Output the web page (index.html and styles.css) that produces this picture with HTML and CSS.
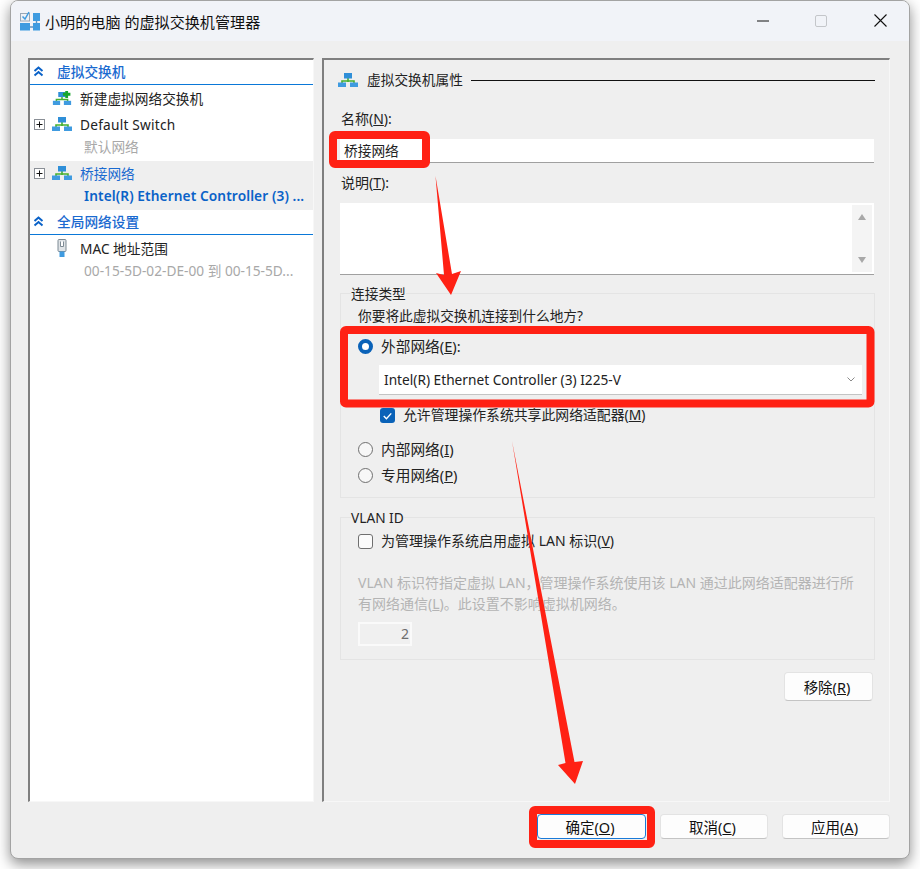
FILE: index.html
```html
<!DOCTYPE html>
<html lang="zh-CN">
<head>
<meta charset="utf-8">
<title>虚拟交换机管理器</title>
<link rel="stylesheet" href="styles.css">
</head>
<body>
<svg class="defs" width="0" height="0" aria-hidden="true">
  <symbol id="net" viewBox="0 0 20 14">
    <path d="M10 5v4M4 10V8h12v2" fill="none" stroke="#46b02e" stroke-width="1.6"/>
    <rect x="6" y="0" width="8" height="5.500" fill="#2f8fd8"/>
    <rect x="0" y="9.500" width="8" height="4.500" fill="#3f9be0"/>
    <rect x="12" y="9.500" width="8" height="4.500" fill="#3f9be0"/>
  </symbol>
  <symbol id="chev" viewBox="0 0 11 11">
    <path d="M1.500 5 5.500 1.500 9.500 5M1.500 9.500 5.500 6 9.500 9.500" fill="none" stroke="#0a62c8" stroke-width="2"/>
  </symbol>
  <symbol id="plus" viewBox="0 0 11 11">
    <rect x=".5" y=".5" width="10" height="10" fill="#fff" stroke="#8a8f96"/>
    <path d="M2.500 5.500h6M5.500 2.500v6" stroke="#111" stroke-width="1"/>
  </symbol>
</svg>

<div class="window">
  <header class="titlebar">
    <svg class="app-icon" viewBox="0 0 20 20">
      <path d="M10 16h3M16.500 10v2" stroke="#5f93bf" stroke-width="1.400"/>
      <rect x="13" y="2" width="7" height="8" fill="#3f9be0"/>
      <rect x="0" y="12" width="10" height="7.500" fill="#3f9be0"/>
      <rect x="13" y="12" width="7" height="7.500" fill="#3f9be0"/>
      <rect x=".5" y="2.500" width="9" height="7.500" fill="#eef1f6" stroke="#9aa8b6"/>
      <path d="M2.500 5.500l2.500 2.500 4-7" fill="none" stroke="#3f9be0" stroke-width="1.500"/>
    </svg>
    <h1 class="title">小明的电脑 的虚拟交换机管理器</h1>
    <div class="controls">
      <svg class="ctl ctl-min" viewBox="0 0 12 12"><path d="M0 6h12" stroke="#111" stroke-width="1"/></svg>
      <svg class="ctl ctl-max" viewBox="0 0 12 12"><rect x=".5" y=".5" width="11" height="11" rx="1.500" fill="none" stroke="#c4c6ca"/></svg>
      <svg class="ctl ctl-close" viewBox="0 0 13 13"><path d="M.5.500l12 12M12.500.500l-12 12" stroke="#111" stroke-width="1.100"/></svg>
    </div>
  </header>

  <main class="content">
    <div class="panes">
      <nav class="pane tree">
        <div class="sec-head"><svg class="chev"><use href="#chev"/></svg><span>虚拟交换机</span></div>
        <div class="row row-new">
          <span class="exp"></span>
          <svg class="net" viewBox="0 0 20 15">
            <use href="#net" width="20" height="14" y="1"/>
            <path d="M11 3.500h8M15 0v7.500" stroke="#17a52c" stroke-width="3"/>
          </svg>
          <span>新建虚拟网络交换机</span>
        </div>
        <div class="row row-sw">
          <svg class="exp"><use href="#plus"/></svg>
          <svg class="net"><use href="#net"/></svg>
          <span class="latin">Default Switch</span>
        </div>
        <div class="sub sub-gray">默认网络</div>
        <div class="selected">
          <div class="row row-sel">
            <svg class="exp"><use href="#plus"/></svg>
            <svg class="net"><use href="#net"/></svg>
            <span class="blue">桥接网络</span>
          </div>
          <div class="sub sub-bold">Intel(R) Ethernet Controller (3) ...</div>
        </div>
        <div class="sec-head"><svg class="chev"><use href="#chev"/></svg><span>全局网络设置</span></div>
        <div class="row row-mac">
          <span class="exp"></span>
          <svg class="net mac" viewBox="0 0 20 18">
            <rect x="6" y="0.500" width="8" height="12" rx="1" fill="#dfe3e6" stroke="#7d8a94"/>
            <path d="M8.500 2.500v5h3v-5" fill="#fff" stroke="#7d8a94"/>
            <rect x="7.500" y="12.500" width="5" height="5.500" fill="#3f9be0"/>
          </svg>
          <span>MAC 地址范围</span>
        </div>
        <div class="sub sub-gray sub-mac">00-15-5D-02-DE-00 到 00-15-5D...</div>
      </nav>

      <section class="pane props">
        <div class="prop-title">
          <svg class="net"><use href="#net"/></svg>
          <span class="prop-name">虚拟交换机属性</span>
          <i class="rule"></i>
        </div>
        <label class="label label-name">名称(<u>N</u>):</label>
        <div class="input">桥接网络</div>
        <label class="label">说明(<u>T</u>):</label>
        <div class="textarea">
          <div class="scroll">
            <svg class="tri" viewBox="0 0 8 6"><path d="M4 0l4 6H0z" fill="#a8a8a8"/></svg>
            <svg class="tri" viewBox="0 0 8 6"><path d="M0 0h8L4 6z" fill="#a8a8a8"/></svg>
          </div>
        </div>

        <div class="group group-conn">
          <div class="legend">连接类型</div>
          <div class="line line-q">你要将此虚拟交换机连接到什么地方?</div>
          <div class="line opt big opt-ext"><span class="radio on"></span><span>外部网络(<u>E</u>):</span></div>
          <div class="select">
            <span>Intel(R) Ethernet Controller (3) I225-V</span>
            <svg class="caret" viewBox="0 0 8 5"><path d="M.5.500 4 4 7.500.500" fill="none" stroke="#8a8a8a"/></svg>
          </div>
          <div class="line opt opt-share">
            <span class="check on"><svg viewBox="0 0 14 14"><path d="M3.500 7.500l2.500 2.500 4.500-5" fill="none" stroke="#fff" stroke-width="1.300"/></svg></span>
            <span>允许管理操作系统共享此网络适配器(<u>M</u>)</span>
          </div>
          <div class="line opt big opt-int"><span class="radio"></span><span>内部网络(<u>I</u>)</span></div>
          <div class="line opt big opt-pri"><span class="radio"></span><span>专用网络(<u>P</u>)</span></div>
        </div>

        <div class="group group-vlan">
          <div class="legend">VLAN ID</div>
          <div class="line opt opt-vlan"><span class="check"></span><span>为管理操作系统启用虚拟 LAN 标识(<u>V</u>)</span></div>
          <p class="hint">VLAN 标识符指定虚拟 LAN，管理操作系统使用该 LAN 通过此网络适配器进行所有网络通信(<u>L</u>)。此设置不影响虚拟机网络。</p>
          <div class="num">2</div>
        </div>

        <div class="remove-row"><button class="btn btn-remove">移除(<u>R</u>)</button></div>
      </section>
    </div>

    <footer class="footer">
      <button class="btn btn-main primary">确定(<u>O</u>)</button>
      <button class="btn btn-main">取消(<u>C</u>)</button>
      <button class="btn btn-main">应用(<u>A</u>)</button>
    </footer>
  </main>
</div>

<svg class="marks" viewBox="0 0 920 869" aria-hidden="true">
  <g fill="none" stroke="#ff2114" stroke-width="8">
    <rect x="333" y="135" width="93" height="29" rx="2"/>
    <rect x="344" y="330" width="526.500" height="73.500" rx="2"/>
    <rect x="533" y="810" width="118" height="34" rx="2"/>
  </g>
  <g fill="#ff2114">
    <polygon points="435.500,176 444,275 436,273 451,295 461,271 452,274"/>
    <polygon points="512,441 565.500,763 558,765 575,784 583,761 574.500,762"/>
  </g>
</svg>
</body>
</html>
```

FILE: styles.css
```css
* { box-sizing: border-box; }

html, body { margin: 0; padding: 0; }

body {
  width: 920px;
  height: 869px;
  overflow: hidden;
  background: #fff;
  padding: 0 10px;
  font-family: "Noto Sans", "Noto Sans CJK SC", sans-serif;
  font-size: 13.7px;
  color: #222;
}

.defs { position: absolute; }

u { text-underline-offset: 1px; }

.window {
  width: 900px;
  height: 859px;
  border: 1px solid #a3a3a3;
  border-radius: 8px;
  background: #efefef;
  box-shadow: 0 5px 14px rgba(0, 0, 0, .45);
  overflow: hidden;
  display: flex;
  flex-direction: column;
}

.titlebar {
  height: 40px;
  flex: none;
  background: #f1f3f8;
  display: flex;
  align-items: center;
  padding: 0 0 1px 9px;
}

.app-icon { width: 20px; height: 20px; flex: none; }

.title {
  margin: 0 0 0 5px;
  font-size: 15.1px;
  font-weight: 400;
  color: #111;
  white-space: nowrap;
}

.controls { margin-left: auto; display: flex; align-items: center; }
.ctl { display: block; }
.ctl-min { width: 12px; height: 12px; margin-right: 46px; }
.ctl-max { width: 12px; height: 12px; margin-right: 47px; }
.ctl-close { width: 13px; height: 13px; margin-right: 22px; }

.content { flex: 1; padding: 17px 19px 0 17px; }

.panes { display: flex; gap: 8px; height: 744px; }

.pane {
  border-style: solid;
  border-width: 2px 1px 1px 2px;
  border-color: #7f7f7f #f7f7f7 #f7f7f7 #7f7f7f;
}

/* tree */
.tree { width: 286px; background: #fff; flex: none; }

.sec-head {
  height: 25px;
  border-bottom: 1px solid #0a78d8;
  display: flex;
  align-items: center;
  color: #1a6ad0;
  padding: 0 0 2px 3px;
  gap: 13px;
  font-weight: 500;
}

.chev { width: 11px; height: 11px; flex: none; }

.row { display: flex; align-items: center; padding-left: 4px; color: #222; white-space: nowrap; }
.exp { width: 11px; height: 11px; flex: none; margin-right: 7px; }
.net { width: 20px; height: 14px; flex: none; margin-right: 8px; }
.mac { height: 18px; }
.latin { letter-spacing: .22px; }

.row-new { height: 25px; }
.row-sw { height: 28px; }

.sub { padding-left: 54px; height: 23px; line-height: 18px; white-space: nowrap; }
.sub-gray { color: #a8a8a8; }
.sub-bold { color: #0a62c8; font-weight: 600; line-height: 18px; letter-spacing: .1px; }
.sub-mac { line-height: 22px; }

.selected { background: #efefef; height: 49px; }
.row-sel { height: 26px; padding-bottom: 2px; }
.blue { color: #1a6ad0; }

.row-mac { height: 25px; }

/* properties */
.props {
  flex: 1;
  padding: 10px 15px 0 16px;
}

.prop-title { display: flex; align-items: center; height: 20px; }
.prop-title .net { margin-right: 9px; margin-left: -2px; }
.prop-name { padding-bottom: 2px; }
.rule { flex: 1; height: 1px; background: #111; margin-left: 8px; margin-right: -1px; }

.label {
  display: block;
  height: 20px;
  line-height: 20px;
  margin: 10px 0 0 1px;
  font-size: 14px;
}
.label-name { margin-top: 19px; }

.input {
  height: 24px;
  margin-top: 10px;
  background: #fff;
  border-bottom: 1px solid #a0a0a0;
  padding-left: 4px;
  line-height: 24px;
}

.textarea {
  height: 72px;
  margin-top: 10px;
  background: #fff;
  border-bottom: 1px solid #a0a0a0;
  padding: 2px 2px 2px 0;
  display: flex;
  justify-content: flex-end;
}

.scroll {
  width: 20px;
  background: #f4f4f4;
  display: flex;
  flex-direction: column;
  align-items: center;
  justify-content: space-between;
  padding: 9px 0;
}
.tri { width: 8px; height: 6px; }

.group {
  border: 1px solid #e4e4e4;
  margin-right: -1px;
  padding-left: 17px;
}
.group-conn { height: 205px; margin-top: 18px; }
.group-vlan { height: 143px; margin-top: 19px; }

.legend {
  height: 20px;
  line-height: 20px;
  margin: -10px 0 0 -7px;
  width: max-content;
  background: #efefef;
}

.line { height: 20px; line-height: 20px; white-space: nowrap; }
.line-q { margin-top: 2px; }

.opt { display: flex; align-items: center; gap: 8px; font-size: 14px; }
.big { font-size: 14.7px; }
.opt-ext { margin-top: 10px; }
.opt-share { margin-top: 10px; margin-left: 22px; font-size: 13.85px; }
.opt-int { margin-top: 14px; }
.opt-pri { margin-top: 6px; }
.opt-vlan { margin-top: 3px; }

.radio {
  width: 15px;
  height: 15px;
  flex: none;
  border-radius: 50%;
  border: 1.500px solid #6f6f6f;
  background: #f7f7f7;
}
.radio.on { border: 4px solid #0a62b8; background: #fff; }

.check {
  width: 15px;
  height: 15px;
  flex: none;
  border-radius: 3px;
  border: 1.500px solid #6f6f6f;
  background: #fbfbfb;
}
.check.on { background: #0a62b8; border: none; }
.check svg { display: block; width: 15px; height: 15px; }

.select {
  width: 483px;
  height: 30px;
  margin: 9px 0 0 21px;
  background: #fff;
  border-bottom: 1px solid #c4c4c4;
  padding: 0 7px 0 5px;
  display: flex;
  align-items: center;
  justify-content: space-between;
}
.caret { width: 8px; height: 5px; }

.hint {
  margin: 21px 16px 0 0;
  line-height: 21px;
  color: #b4b4b4;
  font-size: 14px;
}

.num {
  width: 54px;
  height: 24px;
  margin-top: 8px;
  border: 2px solid #fafafa;
  background: #f0f0f0;
  text-align: right;
  line-height: 20px;
  padding-right: 1px;
  color: #6d6d6d;
  font-size: 14px;
}

.remove-row { display: flex; justify-content: flex-end; margin-top: 12px; }

.btn {
  font: inherit;
  color: #111;
  background: #fdfdfd;
  border: 1px solid #e3e3e3;
  border-bottom-color: #c4c4c4;
  border-radius: 4px;
  padding: 0 3px 0 0;
}
.btn-remove { width: 89px; height: 29px; margin-right: 1px; font-size: 14.5px; }

.footer { display: flex; justify-content: flex-end; gap: 14px; margin-top: 12px; }
.btn-main { width: 108px; height: 25px; font-size: 14.5px; }
.primary { width: 109px; border: 1px solid #1a7ad8; }

.marks {
  position: absolute;
  left: 0;
  top: 0;
  width: 920px;
  height: 869px;
  pointer-events: none;
}
```
